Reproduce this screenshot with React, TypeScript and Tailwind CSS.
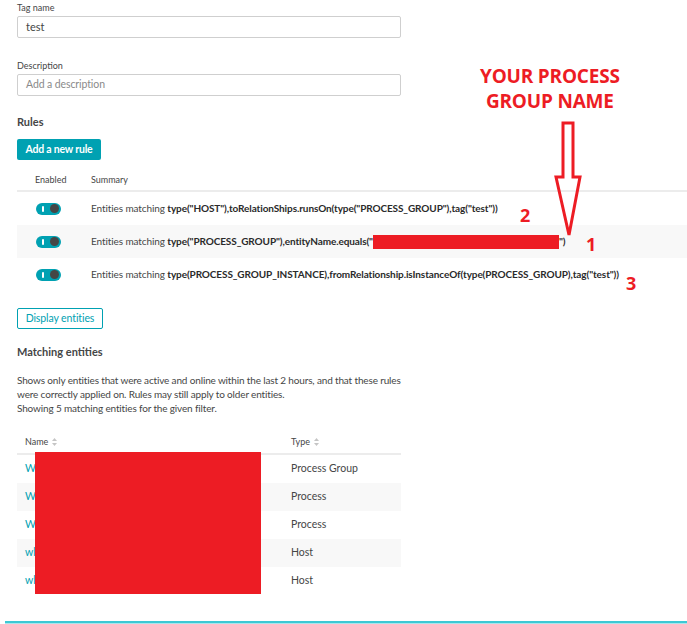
import React from 'react'

const teal = 'text-[#00a1b2]'

function Toggle() {
  return (
    <div className="flex h-[12px] w-[25px] items-center rounded-full bg-[#00a1b2] px-[2px]">
      <span className="ml-[4px] h-[6px] w-[2px] rounded bg-white" />
      <span className="ml-auto h-[9px] w-[9px] rounded-full bg-[#454646]" />
    </div>
  )
}

const rules = [
  { bold: 'type("HOST"),toRelationShips.runsOn(type("PROCESS_GROUP"),tag("test"))', grey: false },
  { bold: 'type("PROCESS_GROUP"),entityName.equals("', grey: true, redacted: true },
  { bold: 'type(PROCESS_GROUP_INSTANCE),fromRelationship.isInstanceOf(type(PROCESS_GROUP),tag("test"))', grey: false },
]

const entities = [
  { name: 'We', type: 'Process Group' },
  { name: 'We', type: 'Process' },
  { name: 'We', type: 'Process' },
  { name: 'wl', type: 'Host' },
  { name: 'wl', type: 'Host' },
]

function SortIcon() {
  return (
    <svg width="5" height="8" viewBox="0 0 5 8" className="ml-[4px] inline-block">
      <path d="M2.5 0 L5 3 H0 Z" fill="#c5c5c5" />
      <path d="M2.5 8 L5 5 H0 Z" fill="#c5c5c5" />
    </svg>
  )
}

export default function App() {
  return (
    <div className="relative h-[624px] w-[687px] overflow-hidden bg-white text-[#454646]" style={{ fontFamily: 'Lato, "Open Sans", sans-serif' }}>
      <div className="pl-[17px] pt-[2px]">
        <div className="text-[9px] leading-[12px]">Tag name</div>
        <div className="mt-[2px] flex h-[22px] w-[384px] items-center rounded-[2px] border border-[#cfcfcf] px-[8px] text-[11px]">test</div>

        <div className="mt-[22px] text-[9px] leading-[12px]">Description</div>
        <div className="mt-[2px] flex h-[22px] w-[384px] items-center rounded-[2px] border border-[#cfcfcf] px-[8px] text-[10.5px] tracking-[-0.1px] text-[#8a8a8a]">Add a description</div>

        <div className="mt-[19px] text-[11px] font-bold leading-[14px]">Rules</div>
        <div className="mt-[10px] flex h-[21px] w-[84px] items-center justify-center rounded-[2px] bg-[#00a1b2] text-[10.5px] font-bold tracking-[-0.2px] text-white">Add a new rule</div>

        <div className="mt-[13px] flex h-[19px] items-start border-b-2 border-[#ececec] text-[9px]">
          <span className="ml-[18px] w-[56px]">Enabled</span>
          <span>Summary</span>
        </div>
        {rules.map((r, i) => (
          <div key={i} className={`flex h-[33px] items-center text-[10px] tracking-[-0.1px] ${r.grey ? 'bg-[#f8f8f8]' : ''}`}>
            <div className="ml-[19px] w-[55px]"><Toggle /></div>
            <span className="whitespace-nowrap">
              Entities matching <b className="font-bold text-[#2a2a2a]">{r.bold}</b>
              {r.redacted && (
                <>
                  <span className="inline-block h-[14px] w-[186px] bg-[#ed1c24] align-middle" />
                  <b className="font-bold text-[#2a2a2a]">")</b>
                </>
              )}
            </span>
          </div>
        ))}

        <div className="mt-[17px] flex h-[21px] w-[86px] items-center justify-center rounded-[2px] border border-[#00a1b2] text-[10.5px] tracking-[-0.1px] text-[#00a1b2]">Display entities</div>

        <div className="mt-[16px] text-[11px] font-bold leading-[14px]">Matching entities</div>
        <div className="mt-[14px] text-[10px] leading-[14px] tracking-[-0.15px]">
          Shows only entities that were active and online within the last 2 hours, and that these rules<br />
          were correctly applied on. Rules may still apply to older entities.<br />
          Showing 5 matching entities for the given filter.
        </div>

        <div className="mt-[16px] w-[384px]">
          <div className="flex h-[24px] items-center border-b-2 border-[#ececec] text-[9px]">
            <span className="ml-[8px] flex w-[266px] items-center">Name<SortIcon /></span>
            <span className="flex items-center">Type<SortIcon /></span>
          </div>
          {entities.map((e, i) => (
            <div key={i} className={`flex h-[28px] items-center text-[10.5px] ${i % 2 ? 'bg-[#f8f8f8]' : ''}`}>
              <span className={`ml-[8px] w-[266px] ${teal}`}>{e.name}</span>
              <span>{e.type}</span>
            </div>
          ))}
        </div>
      </div>

      {/* redaction over names */}
      <div className="absolute left-[35px] top-[452px] h-[142px] w-[226px] bg-[#ed1c24]" />

      {/* bottom rule */}
      <div className="absolute left-[5px] right-0 top-[621px] h-[2px] bg-[#3ec8d4]" />
      <div className="absolute left-[5px] right-0 top-[623px] h-[1px] bg-[#a8e6ec]" />

      {/* annotations */}
      <div className="absolute left-[480px] top-[64px] text-center text-[19px] font-bold leading-[25px] tracking-[-0.2px] text-[#ed1c24]" style={{ fontFamily: '"Open Sans", sans-serif' }}>
        YOUR PROCESS<br />GROUP NAME
      </div>
      <svg className="absolute left-[553px] top-[121px]" width="30" height="118" viewBox="0 0 30 118">
        <path d="M10 2 H20 V56 H27 L16 114 L3 56 H10 Z" fill="none" stroke="#ed1c24" strokeWidth="3" strokeLinejoin="miter" />
      </svg>
      <div className="absolute left-[520px] top-[202px] text-[18px] font-bold text-[#ed1c24]" style={{ fontFamily: '"Open Sans", sans-serif' }}>2</div>
      <div className="absolute left-[586px] top-[231px] text-[18px] font-bold text-[#ed1c24]" style={{ fontFamily: '"Open Sans", sans-serif' }}>1</div>
      <div className="absolute left-[626px] top-[270px] text-[18px] font-bold text-[#ed1c24]" style={{ fontFamily: '"Open Sans", sans-serif' }}>3</div>
    </div>
  )
}
